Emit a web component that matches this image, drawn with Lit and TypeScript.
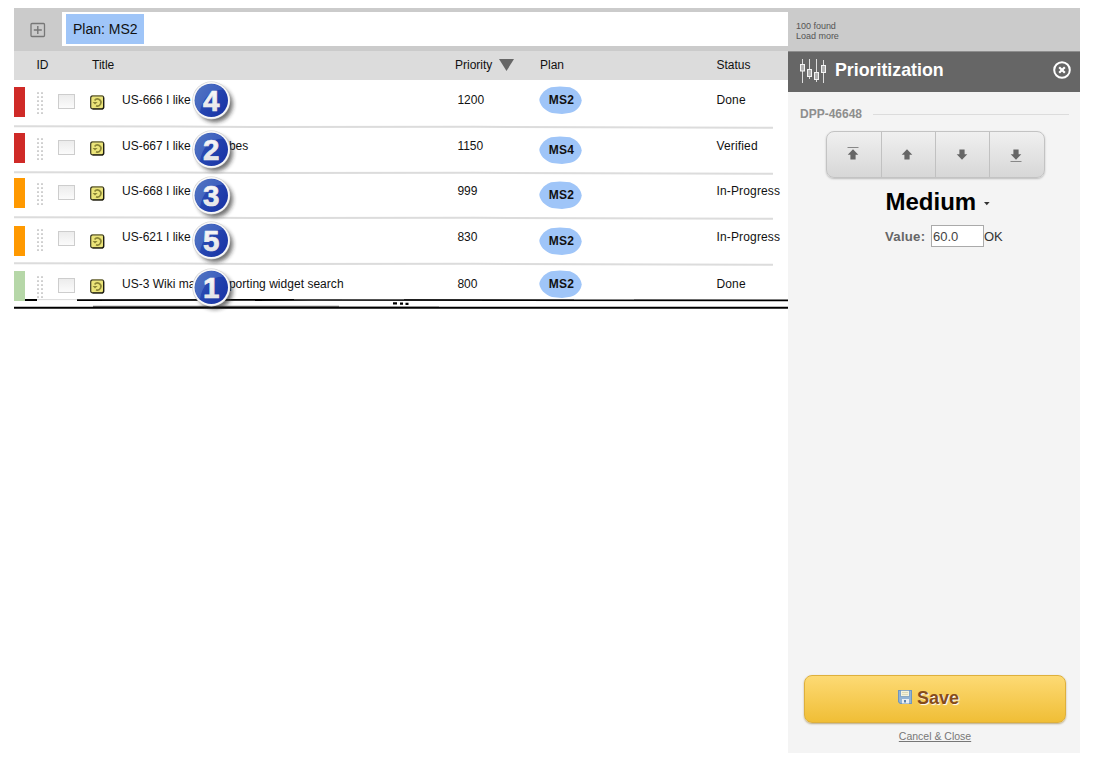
import { LitElement, html, css, svg } from "lit";
import { customElement } from "lit/decorators.js";

interface Story {
  key: string;
  color: string;
  start: string;
  end: string;
  priority: string;
  plan: string;
  status: string;
  rank: string;
}

const stories: Story[] = [
  { key: "r1", color: "red", start: "US-666 I like", end: "", priority: "1200", plan: "MS2", status: "Done", rank: "4" },
  { key: "r2", color: "red", start: "US-667 I like", end: "bes", priority: "1150", plan: "MS4", status: "Verified", rank: "2" },
  { key: "r3", color: "orange", start: "US-668 I like", end: "", priority: "999", plan: "MS2", status: "In-Progress", rank: "3" },
  { key: "r4", color: "orange", start: "US-621 I like", end: "", priority: "830", plan: "MS2", status: "In-Progress", rank: "5" },
  { key: "r5", color: "green", start: "US-3 Wiki ma", end: "porting widget search", priority: "800", plan: "MS2", status: "Done", rank: "1" },
];

@customElement("story-row")
class StoryRow extends LitElement {
  static properties = { story: { attribute: false } };
  declare story: Story;

  static styles = css`
    :host { display: block; }
    .row {
      position: relative;
      display: grid;
      grid-template-columns: 22px 21px 33px 32px 335.4px 82.6px 176.5px 72px;
      align-items: start;
      height: 46px;
      box-sizing: border-box;
      font-size: 12px;
      line-height: 14px;
      color: #111;
    }
    .r1 { height: 47px; --bar: 7px; --drag: 12px; --check: 14px; --icon: 15px; --text: 13px; --stat: 13px; --pill: 6px; --badge: 1px; }
    .r2 { --bar: 6px; --drag: 11px; --check: 13px; --icon: 14px; --text: 12px; --stat: 12px; --pill: 9px; --badge: 2.5px; }
    .r3 { height: 45px; --bar: 5px; --drag: 10px; --check: 12px; --icon: 13px; --text: 11px; --stat: 11px; --pill: 8px; --badge: 2.5px; }
    .r4 { --bar: 8px; --drag: 11px; --check: 13px; --icon: 16px; --text: 12px; --stat: 12px; --pill: 9px; --badge: 3px; }
    .r5 { height: 35px; --bar: 7px; --drag: 12px; --check: 14px; --icon: 15px; --text: 13px; --stat: 13px; --pill: 6px; --badge: 4px; }
    .bar { width: 11px; height: 30px; margin-top: var(--bar); }
    .red { background: #cf2a27; }
    .orange { background: #ff9900; }
    .green { background: #b6d7a8; }
    .drag { margin-top: var(--drag); width: 8px; height: 23px; display: block; }
    .check {
      width: 17px; height: 15px; box-sizing: border-box; margin: var(--check) 0 0 .5px;
      border: 1px solid #cdcdcd; background: linear-gradient(#ececec, #fbfbfb);
    }
    .icon { margin-top: var(--icon); width: 15px; height: 15px; display: block; }
    .title { display: flex; margin-top: var(--text); white-space: pre; }
    .start { width: 106.9px; }
    .end { letter-spacing: .03px; }
    .num { margin-top: var(--text); }
    .plan { margin: var(--pill) 0 0 -.5px; display: grid; width: 43px; height: 28px; }
    .plan svg, .plan b { grid-area: 1 / 1; }
    .plan b { text-align: center; line-height: 28px; letter-spacing: .3px; padding-left: 1px; }
    .status { margin-top: var(--stat); letter-spacing: .15px; white-space: nowrap; }
    .badge { position: absolute; left: 176.3px; top: calc(var(--badge) - 2px); width: 46px; height: 46px; z-index: 2; overflow: visible; }
    .line { position: absolute; left: 0; bottom: -2px; width: 760px; height: 4px; }
  `;

  render() {
    const s = this.story;
    const dots = [];
    for (let y = 0; y < 6; y++) for (const x of [1, 5]) dots.push(svg`<rect x=${x} y=${y * 4 + 0.2} width="2" height="1.8"/>`);
    return html`
      <div class="row ${s.key}">
        <div class="bar ${s.color}"></div>
        <svg class="drag" fill="#cfcfcf">${dots}</svg>
        <div class="check"></div>
        <svg class="icon" viewBox="0 0 15 15">
          <rect x=".7" y=".9" width="13" height="13" rx="2" fill="#ebe479" stroke="#3c3a22" stroke-width="1.2"/>
          <path d="M2.4 1H12.6" stroke="#a5a060" stroke-width="1"/>
          <path d="M13.6 2.5v10.2L12.4 14H2.6" fill="none" stroke="#1e1d12" stroke-width="1.2"/>
          <path d="M4.6 5.4A3.5 3.5 0 1 1 6 10.7" fill="none" stroke="#8c8636" stroke-width="1.6"/>
          <path d="M2.6 7h5L5 9.6z" fill="#8c8636"/>
        </svg>
        <div class="title"><span class="start">${s.start}</span><span class="end">${s.end}</span></div>
        <div class="num">${s.priority}</div>
        <div class="plan">
          <svg width="43" height="28" viewBox="0 0 43 28"><path d="M.3 14C.5 10.5 4 4 12 1.2L21 .4 31 1.2C38.5 4 42 9 42.7 14.5 42 20 38 25 31.5 26.8L23 28 13 27C5 24.5 1.2 19 .3 14z" fill="#9fc5f8"/></svg>
          <b>${s.plan}</b>
        </div>
        <div class="status">${s.status}</div>
        ${s.key === "r5" ? "" : html`<svg class="line" viewBox="0 0 760 4"><path d="M0 1.2L160 1.4 240 2 460 1.8 759 2.8" fill="none" stroke="#dcdcdc" stroke-width="2"/></svg>`}
        <svg class="badge" viewBox="0 0 46 46">
          <defs>
            <linearGradient id="g" x1="0" y1=".1" x2="1" y2=".7">
              <stop offset="0" stop-color="#3c5fb4"/><stop offset=".5" stop-color="#2545b0"/><stop offset="1" stop-color="#1a35a6"/>
            </linearGradient>
            <linearGradient id="t" x1="0" y1="0" x2="0" y2="1">
              <stop offset="0" stop-color="#fff"/><stop offset="1" stop-color="#dedee2"/>
            </linearGradient>
            <filter id="s" x="-30%" y="-30%" width="170%" height="170%"><feGaussianBlur stdDeviation="2"/></filter>
          </defs>
          <circle cx="24.8" cy="25.2" r="18" fill="#222" opacity=".65" filter="url(#s)"/>
          <circle cx="21.3" cy="21.5" r="19" fill="#cfcfcf"/>
          <circle cx="21.3" cy="21.4" r="18.4" fill="#f8f8f8"/>
          <circle cx="21.3" cy="21.4" r="16.7" fill="url(#g)"/>
          <path d="M10 33A16 16 0 0 1 5 21C5 12 12 5.2 20 5c6-.3 10 2 13 5.6C20 11 12 20 10 33z" fill="#7ba1df" opacity=".32"/>
          <text x="21.2" y="31.6" text-anchor="middle" font-size="29.5" font-weight="700" fill="url(#t)" stroke="#eee" stroke-width=".7">${s.rank}</text>
        </svg>
      </div>`;
  }
}

@customElement("app-root")
class AppRoot extends LitElement {
  static styles = css`
    :host {
      display: flex;
      box-sizing: border-box;
      width: 1098px;
      height: 770px;
      padding: 8px 18px 17px 14px;
      background: #fff;
      overflow: hidden;
      font-family: "Liberation Sans", Arial, sans-serif;
      color: #111;
    }
    .list { width: 774px; flex: none; }
    .toolbar { display: flex; height: 43px; background: #cbcbcb; }
    .add { width: 16px; height: 16px; margin: 14px 16px 0; flex: none; }
    .search { flex: 1; height: 34px; margin-top: 4px; background: #fff; padding: 2px 0 0 4px; box-sizing: border-box; }
    .token { display: inline-block; height: 30px; line-height: 30px; width: 78px; box-sizing: border-box; padding-left: 7px; background: #9fc5f8; font-size: 14px; white-space: nowrap; }
    .head {
      display: grid; grid-template-columns: 22.5px 55.5px 363px 44px 41px 176.5px 72px;
      height: 29px; line-height: 28px; background: #dcdcdc; font-size: 12px; white-space: nowrap;
    }
    .tri { width: 15px; height: 12px; margin-top: 8px; }
    .split { display: block; width: 774px; height: 13px; }
    .side { width: 292px; flex: none; background: #f4f4f4; display: flex; flex-direction: column; }
    .found { height: 43px; box-sizing: border-box; padding: 13px 0 0 8px; background: #cbcbcb; color: #555; font-size: 9px; line-height: 10px; letter-spacing: -.02px; }
    .bar { height: 41px; box-sizing: border-box; border-top: 1px solid #8d8d8d; background: #666; display: flex; align-items: center; padding: 0 9px 0 11px; }
    .bar h1 { margin: 0 0 5px 8px; flex: 1; font-size: 17.8px; line-height: 20px; color: #fff; }
    .close { margin-bottom: 5px; }
    .sliders { margin-bottom: 2px; }
    .issue { display: flex; align-items: center; gap: 11px; margin: 15px 11px 0 12px; font-size: 12px; line-height: 14px; font-weight: 700; color: #8e8e8e; }
    .issue i { flex: 1; height: 1px; background: #dcdcdc; }
    .moves {
      display: grid; grid-template-columns: repeat(4, 1fr); width: 219px; height: 47px; box-sizing: border-box;
      margin: 10px 0 0 37.5px; border: 1px solid #c3c3c3; border-radius: 8px; background: linear-gradient(#f0f0f0, #d7d7d7);
      box-shadow: 0 1px 2px #bbb;
    }
    .move { display: flex; align-items: center; justify-content: center; border-left: 1px solid #c1c1c1; padding-right: 2px; }
    .move:first-child { border-left: 0; }
    .level { display: flex; align-items: center; margin: 10px 0 0 97.5px; font-size: 24px; line-height: 28px; font-weight: 700; color: #000; }
    .level svg { margin: 4px 0 0 8px; }
    .value { display: flex; align-items: center; margin: 9px 0 0 97px; font-size: 13px; height: 22px; color: #333; }
    .value b { width: 46px; color: #666; font-size: 13.2px; letter-spacing: .25px; }
    .field { width: 53px; height: 22px; box-sizing: border-box; border: 1px solid #aaa; background: #fff; line-height: 21px; padding-left: 1px; color: #444; }
    .save {
      display: flex; align-items: center; justify-content: center; gap: 5px; width: 262px; height: 48px; box-sizing: border-box;
      margin: auto 0 0 15.5px; border: 1px solid #deb03c; border-radius: 8px; background: linear-gradient(#fdda74, #f0be36);
      box-shadow: 0 1px 2px #b9a981; color: #854c1b; font-size: 18px; font-weight: 700; text-shadow: 1px 1px 1px #fff;
      padding-right: 12px; padding-bottom: 2px;
    }
    .save svg { margin-bottom: 3px; }
    .cancel { align-self: center; margin: 7px 0 11px 2px; font-size: 10.5px; line-height: 12px; color: #777; text-decoration: underline; }
  `;

  private arrow(kind: string) {
    const up = svg`<path d="M8 3.2l5.3 5.5h-2.7v4.8H5.4V8.7H2.7z" fill="#666"/>`;
    const down = svg`<path d="M8 13.8l5.3-5.5h-2.7V3.5H5.4v4.8H2.7z" fill="#666"/>`;
    return html`<svg width="16" height="18" viewBox="0 0 16 18">
      ${kind === "top" || kind === "up" ? up : down}
      ${kind === "top" ? svg`<path d="M2.5 1.5h11" stroke="#888"/>` : ""}
      ${kind === "bottom" ? svg`<path d="M2.5 15.5h11" stroke="#888"/>` : ""}
    </svg>`;
  }

  render() {
    return html`
      <div class="list">
        <div class="toolbar">
          <svg class="add" viewBox="0 0 16 16" fill="none" stroke="#777"><rect x="1" y="1.5" width="13.5" height="13" rx="1" stroke-width="1.3"/><path d="M7.8 4v8M3.8 8h8" stroke-width="1.4"/></svg>
          <div class="search"><span class="token">Plan: MS2</span></div>
        </div>
        <div class="head">
          <span></span><span>ID</span><span>Title</span><span>Priority</span>
          <svg class="tri" viewBox="0 0 15 12"><path d="M0 0h15L7.5 12z" fill="#666"/></svg>
          <span>Plan</span><span>Status</span>
        </div>
        ${stories.map((s) => html`<story-row .story=${s}></story-row>`)}
        <svg class="split" viewBox="0 0 774 13">
          <path d="M11 1h12M63 1.2L300 .9 774 1.3" stroke="#000" stroke-width="1.8" fill="none"/>
          <path d="M23 .6h40M280 0h110M560 0h60" stroke="#ccc" stroke-width=".7"/>
          <path d="M79 7.3h246" stroke="#555" stroke-width="1"/>
          <path d="M325 7.5h100" stroke="#bbb" stroke-width=".8"/>
          <path d="M0 8.8h774" stroke="#000" stroke-width="2"/>
          <path d="M379 4.3h4M386 4.7h3M391.5 4.8h3" stroke="#000" stroke-width="2.2"/>
        </svg>
      </div>
      <div class="side">
        <div class="found">100 found<br>Load more</div>
        <div class="bar">
          <svg class="sliders" width="28" height="25" viewBox="0 0 28 25">
            <path d="M3.5 0v24M10.5 0v20M17.5 0v23M24.5 1v23" stroke="#ddd" stroke-width="1"/>
            <g fill="#b0b0b0" stroke="#f4f4f4"><rect x="1.5" y="5.5" width="4" height="6.5"/><rect x="8.5" y="10.5" width="4" height="7"/><rect x="15.5" y="13.5" width="4" height="7"/><rect x="22.5" y="6.5" width="4" height="7"/></g>
          </svg>
          <h1>Prioritization</h1>
          <svg class="close" width="18" height="18" viewBox="0 0 18 18" fill="none" stroke="#fff" stroke-width="2"><circle cx="9" cy="9" r="7.8"/><path d="M6.2 6.2l5.6 5.6M11.8 6.2l-5.6 5.6" stroke-width="2.2"/></svg>
        </div>
        <div class="issue"><span>DPP-46648</span><i></i></div>
        <div class="moves">
          ${["top", "up", "down", "bottom"].map((k) => html`<div class="move">${this.arrow(k)}</div>`)}
        </div>
        <div class="level">Medium<svg width="6" height="4" viewBox="0 0 6 4"><path d="M0 0h5.6L2.8 3.2z" fill="#333"/></svg></div>
        <div class="value"><b>Value:</b><div class="field">60.0</div><span>OK</span></div>
        <div class="save">
          <svg width="14" height="14" viewBox="0 0 14 14">
            <path d="M0 0h14v14H2l-2-2z" fill="#7096be"/><path d="M1 1h1.5v6h9V1H13v12H2.4L1 11.6z" fill="#91b3d5"/>
            <path d="M3 0.8h8v5.4H3z" fill="#f6f4dc"/><path d="M4 2.5h6M4 4.4h6" stroke="#dcd8b8"/>
            <path d="M4 9h7v4.5H4z" fill="#e9eef4"/><path d="M6 10h2v2.5H6z" fill="#5d82aa"/>
          </svg>
          <span>Save</span>
        </div>
        <div class="cancel">Cancel &amp; Close</div>
      </div>`;
  }
}
